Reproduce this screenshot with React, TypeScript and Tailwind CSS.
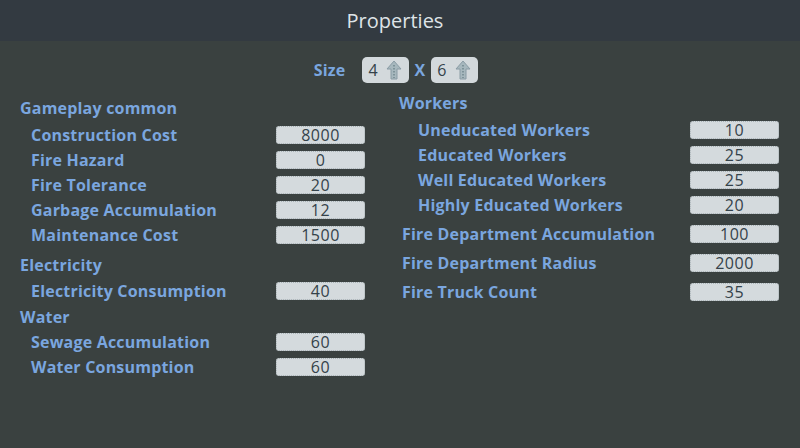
import React from 'react'

type Row = {
  label: string
  value?: string
  kind: 'header' | 'item' | 'top'
  mt?: string
}

const leftRows: Row[] = [
  { label: 'Gameplay common', kind: 'header' },
  { label: 'Construction Cost', value: '8000', kind: 'item', mt: 'mt-[2px]' },
  { label: 'Fire Hazard', value: '0', kind: 'item' },
  { label: 'Fire Tolerance', value: '20', kind: 'item' },
  { label: 'Garbage Accumulation', value: '12', kind: 'item' },
  { label: 'Maintenance Cost', value: '1500', kind: 'item' },
  { label: 'Electricity', kind: 'header', mt: 'mt-[5px]' },
  { label: 'Electricity Consumption', value: '40', kind: 'item', mt: 'mt-[1px]' },
  { label: 'Water', kind: 'header', mt: 'mt-[1px]' },
  { label: 'Sewage Accumulation', value: '60', kind: 'item' },
  { label: 'Water Consumption', value: '60', kind: 'item' },
]

const rightRows: Row[] = [
  { label: 'Workers', kind: 'header' },
  { label: 'Uneducated Workers', value: '10', kind: 'item', mt: 'mt-[2px]' },
  { label: 'Educated Workers', value: '25', kind: 'item' },
  { label: 'Well Educated Workers', value: '25', kind: 'item' },
  { label: 'Highly Educated Workers', value: '20', kind: 'item' },
  { label: 'Fire Department Accumulation', value: '100', kind: 'top', mt: 'mt-[4px]' },
  { label: 'Fire Department Radius', value: '2000', kind: 'top', mt: 'mt-[4px]' },
  { label: 'Fire Truck Count', value: '35', kind: 'top', mt: 'mt-[4px]' },
]

const ValueBox = ({ value }: { value: string }) => (
  <div className="flex h-[18px] w-[89px] items-center justify-center rounded-[3px] border border-dotted border-[#a7b1b5] bg-[#d4dadd] text-[16px] font-normal leading-none tracking-[0.5px] text-[#34424a]">
    {value}
  </div>
)

const ArrowIcon = () => (
  <svg width="16" height="20" viewBox="0 0 16 20">
    <path
      d="M8 1 L15 9 L11 9 L11 19 L5 19 L5 9 L1 9 Z"
      fill="#a7b8be"
      stroke="#8a9ca5"
      strokeWidth="1"
    />
    <path d="M8 5 L8 18" stroke="#72878f" strokeWidth="1.5" strokeDasharray="1.5 1.5" />
  </svg>
)

const SizeBox = ({ value }: { value: string }) => (
  <div className="flex h-[26px] w-[47px] items-center justify-between rounded-[5px] bg-[#d3d9dc] pl-[6px] pr-[7px] text-[16px] font-normal tracking-normal text-[#34424a]">
    <span>{value}</span>
    <ArrowIcon />
  </div>
)

const Column = ({
  rows,
  itemIndent,
  topIndent,
  className,
}: {
  rows: Row[]
  itemIndent: string
  topIndent: string
  className: string
}) => (
  <div className={`flex flex-col ${className}`}>
    {rows.map(row => (
      <div
        key={row.label}
        className={`flex h-[25px] items-center justify-between ${row.mt ?? ''}`}
      >
        <span
          className={
            row.kind === 'item'
              ? itemIndent
              : row.kind === 'top'
                ? topIndent
                : ''
          }
        >
          {row.label}
        </span>
        {row.value && <ValueBox value={row.value} />}
      </div>
    ))}
  </div>
)

export default function App() {
  return (
    <div
      className="flex h-[448px] w-[800px] flex-col bg-[#3a4140]"
      style={{ fontFamily: '"Open Sans", "DejaVu Sans", sans-serif' }}
    >
      <div className="flex h-[41px] items-center justify-center bg-[#333a41] pr-[10px] text-[20px] text-[#dfe4e8]">
        Properties
      </div>

      <div className="mt-[16px] flex items-center justify-center gap-[5px] pr-[8px] text-[16px] font-bold tracking-[0.2px] text-[#7aa6df]">
        <span className="mr-[12px]">Size</span>
        <SizeBox value="4" />
        <span className="mr-[1px]">X</span>
        <SizeBox value="6" />
      </div>

      <div className="flex text-[16px] font-bold tracking-[0.2px] text-[#7aa6df]">
        <Column
          rows={leftRows}
          itemIndent="pl-[11px]"
          topIndent=""
          className="ml-[20px] mt-[12px] w-[345px]"
        />
        <Column
          rows={rightRows}
          itemIndent="pl-[19px]"
          topIndent="pl-[3px]"
          className="ml-[34px] mt-[7px] w-[380px]"
        />
      </div>
    </div>
  )
}
